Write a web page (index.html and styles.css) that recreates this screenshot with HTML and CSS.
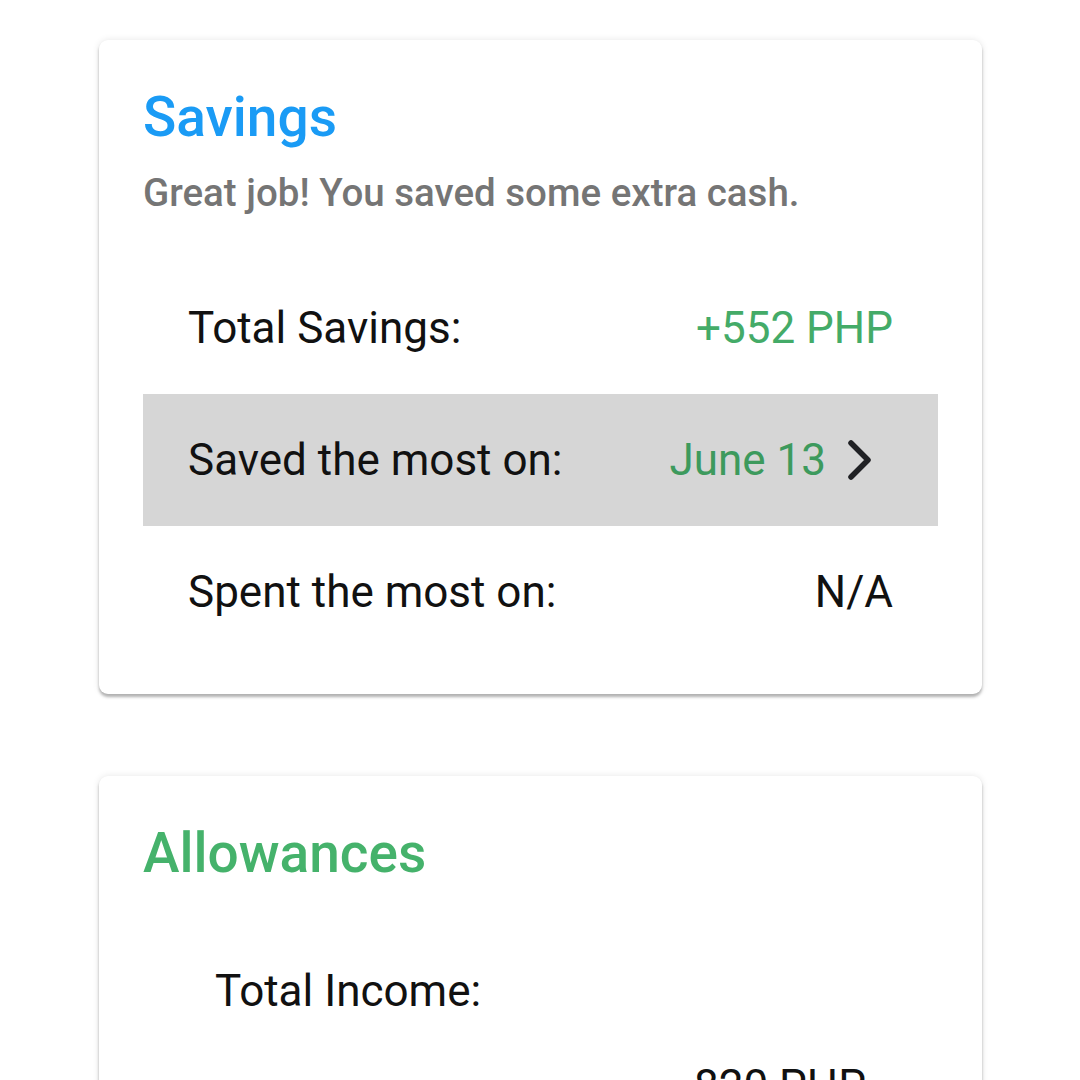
FILE: index.html
```html
<!DOCTYPE html>
<html>
<head>
<meta charset="utf-8">
<link rel="stylesheet" href="styles.css">
</head>
<body>
<main class="page">
  <section class="card card-savings">
    <h1 class="title title-blue">Savings</h1>
    <p class="subtitle">Great job! You saved some extra cash.</p>
    <div class="rows">
      <div class="row">
        <span class="label">Total Savings:</span>
        <span class="value value-green">+552 PHP</span>
      </div>
      <div class="row row-active">
        <span class="label">Saved the most on:</span>
        <span class="value value-link">June 13
          <svg class="chev" width="28" height="44" viewBox="0 0 28 44"><path d="M5 5 L22 22 L5 39" fill="none" stroke="#202124" stroke-width="5.5" stroke-linecap="round" stroke-linejoin="round"/></svg>
        </span>
      </div>
      <div class="row">
        <span class="label">Spent the most on:</span>
        <span class="value">N/A</span>
      </div>
    </div>
  </section>

  <section class="card card-allow">
    <h1 class="title title-green">Allowances</h1>
    <div class="income">
      <div class="income-label">Total Income:</div>
      <div class="income-value">820 PHP</div>
    </div>
  </section>
</main>
</body>
</html>
```

FILE: styles.css
```css
html, body {
  margin: 0;
  padding: 0;
  background: #ffffff;
}
body {
  font-family: Roboto, "Noto Sans", "Liberation Sans", sans-serif;
  color: #111111;
  height: 1080px;
  overflow: hidden;
}
.page {
  padding: 40px 98px 0 99px;
  display: flex;
  flex-direction: column;
  gap: 82px;
}
.card {
  background: #ffffff;
  border-radius: 9px;
  box-shadow: 0 3px 3px rgba(0,0,0,0.28), 0 0 7px rgba(0,0,0,0.10);
}
.card-savings {
  padding: 45px 44px 36px 44px;
}
.title {
  margin: 0;
  font-size: 55px;
  font-weight: 500;
  line-height: 64px;
}
.title-blue { color: #1a9bf5; }
.title-green { color: #45b26b; }
.subtitle {
  margin: 21px 0 0 0;
  font-size: 38.5px;
  font-weight: 500;
  line-height: 45px;
  color: #757575;
}
.rows {
  margin-top: 47px;
  display: flex;
  flex-direction: column;
}
.row {
  height: 132px;
  padding: 0 45px;
  display: flex;
  align-items: center;
  justify-content: space-between;
  font-size: 44px;
}
.row-active {
  background: #d6d6d6;
}
.label { color: #111111; }
.value { color: #111111; display: flex; align-items: center; }
.value-green { color: #44ab68; }
.value-link { color: #3d9a5d; }
.chev {
  margin-left: 20px;
  margin-right: 19px;
}
.card-allow {
  padding: 45px 44px 60px 44px;
}
.income {
  margin-top: 80px;
  padding: 0 72px;
  font-size: 44px;
}
.income-label {
  line-height: 52px;
}
.income-value {
  margin-top: 43px;
  text-align: right;
  line-height: 52px;
}
```
